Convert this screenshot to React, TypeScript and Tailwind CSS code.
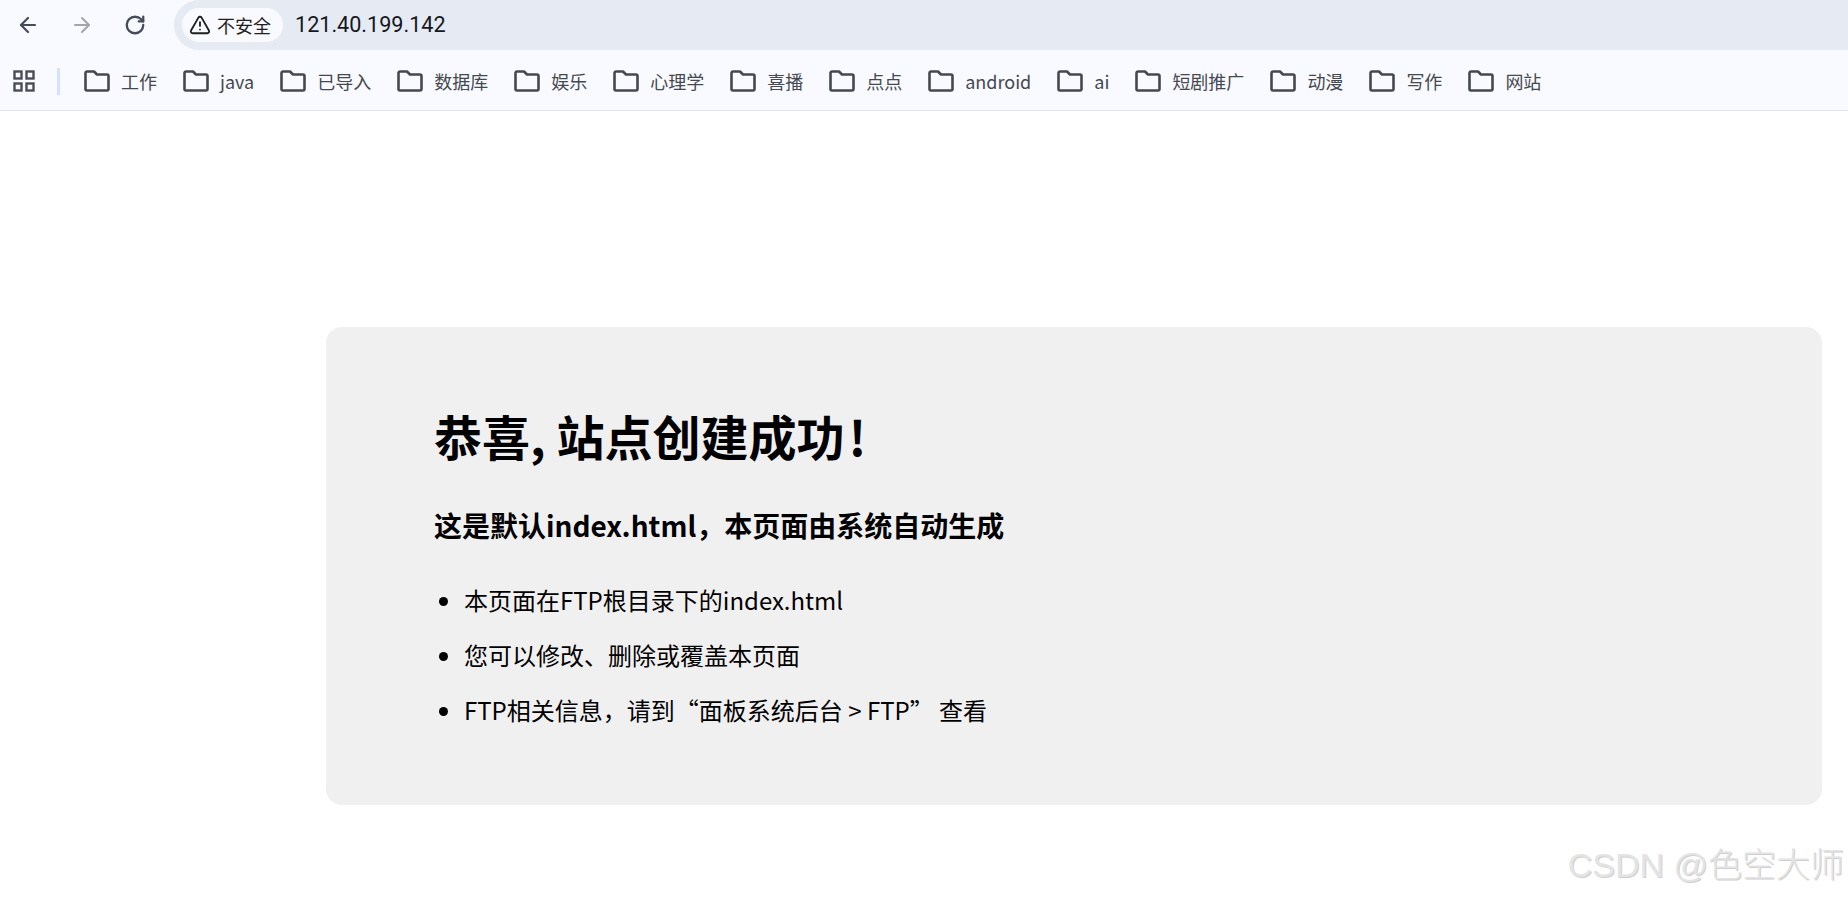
import React from 'react';
import { ArrowLeft, ArrowRight, RotateCw, TriangleAlert } from 'lucide-react';

const bookmarks = ['工作', 'java', '已导入', '数据库', '娱乐', '心理学', '喜播', '点点', 'android', 'ai', '短剧推广', '动漫', '写作', '网站'];

const FolderIcon = () => (
  <svg width="26" height="22" viewBox="0 0 26 22" fill="none" stroke="#45484f" strokeWidth="2.6" strokeLinejoin="round" className="shrink-0">
    <path d="M3 1.5h7l3 3h10a1.5 1.5 0 0 1 1.5 1.5v13a1.5 1.5 0 0 1-1.5 1.5H3A1.5 1.5 0 0 1 1.5 19V3A1.5 1.5 0 0 1 3 1.5Z" />
  </svg>
);

const AppsIcon = () => (
  <svg width="22" height="22" viewBox="0 0 22 22" fill="none" stroke="#4a4d54" strokeWidth="2.4" className="shrink-0">
    <rect x="1.5" y="1.5" width="7" height="7" />
    <rect x="13.5" y="1.5" width="7" height="7" />
    <rect x="1.5" y="13.5" width="7" height="7" />
    <rect x="13.5" y="13.5" width="7" height="7" />
  </svg>
);

export default function App() {
  return (
    <div className="relative h-[898px] overflow-hidden bg-white font-['Noto_Sans_CJK_SC',sans-serif] text-black">
      {/* toolbar */}
      <div className="flex h-[50px] items-center bg-[#f8faff]">
        <div className="flex w-[174px] items-center pl-[16px] pb-[1px]">
          <ArrowLeft size={24} strokeWidth={2.2} className="text-[#454b57]" />
          <ArrowRight size={24} strokeWidth={2} className="ml-[30px] text-[#a3a5a9]" />
          <RotateCw size={22} strokeWidth={2.5} className="ml-[30px] text-[#454b57]" />
        </div>
        <div className="flex h-full flex-1 items-center rounded-l-[25px] bg-[#e6eaf3] pl-[8px]">
          <div className="flex h-[34px] w-[101px] items-center gap-[6px] rounded-full bg-[#f8faff] pl-[7px] text-[18px] text-[#1f1f1f]">
            <TriangleAlert size={22} strokeWidth={2} />
            <span>不安全</span>
          </div>
          <span className="ml-[12px] font-['Roboto',sans-serif] text-[21.6px] text-[#15181d]">121.40.199.142</span>
        </div>
      </div>

      {/* bookmarks */}
      <div className="flex h-[61px] items-center border-b border-[#e1e3e8] bg-[#f8faff] pl-[13px] pt-[2px]">
        <AppsIcon />
        <div className="ml-[22px] mr-[24px] h-[27px] w-[3px] bg-[#d3e3fd]" />
        <div className="flex items-center gap-[26px]">
          {bookmarks.map((name) => (
            <div key={name} className="flex items-center gap-[11px]">
              <FolderIcon />
              <span className="text-[18px] leading-[24px] text-[#45484f]">{name}</span>
            </div>
          ))}
        </div>
      </div>

      {/* page body */}
      <div className="ml-[326px] mr-[26px] mt-[216px] h-[478px] rounded-[16px] bg-[#f0f0f0] pl-[108px] pt-[78px]">
        <h1 className="text-[48px] font-bold leading-[60px]">
          恭喜, 站点创建成功<span className="ml-[4px]">!</span>
        </h1>
        <h3 className="mt-[42px] text-[28px] font-bold leading-[36px]">这是默认index.html，本页面由系统自动生成</h3>
        <ul className="mt-[39px] list-disc pl-[30px] text-[24px] leading-[36px]">
          <li className="mb-[19px]">本页面在FTP根目录下的index.html</li>
          <li className="mb-[19px]">您可以修改、删除或覆盖本页面</li>
          <li>FTP相关信息，请到“面板系统后台 &gt; FTP” 查看</li>
        </ul>
      </div>

      {/* watermark */}
      <div className="absolute bottom-[11px] right-[4px] font-['Liberation_Sans','Noto_Sans_CJK_SC',sans-serif] text-[34px] font-light leading-[44px] text-[#e4e4e4] [text-shadow:1px_1px_0_#cfcfcf]">
        CSDN @色空大师
      </div>
    </div>
  );
}
